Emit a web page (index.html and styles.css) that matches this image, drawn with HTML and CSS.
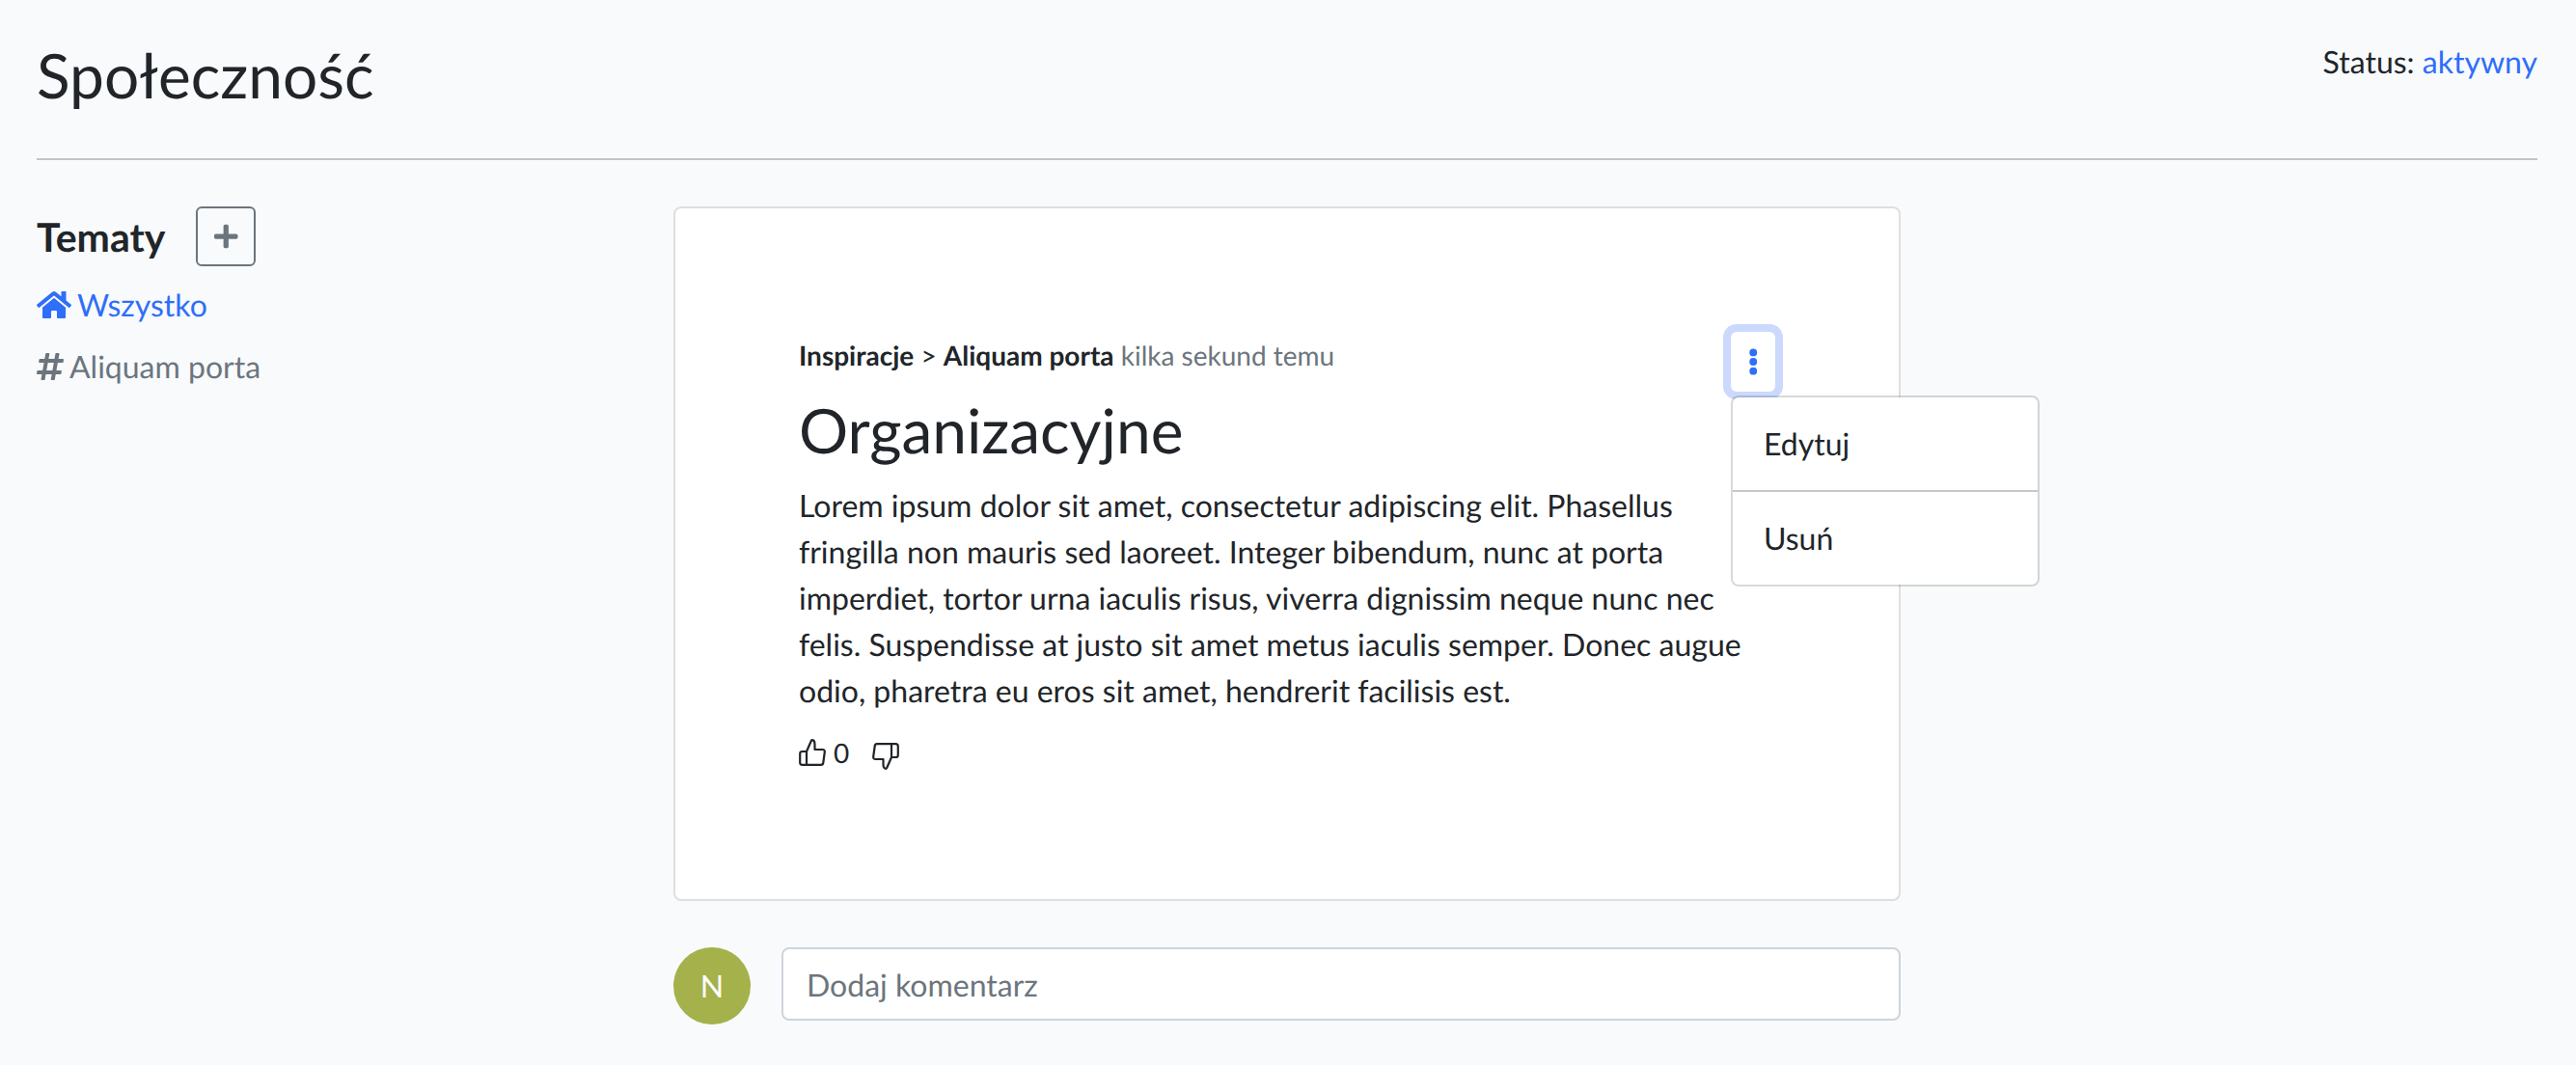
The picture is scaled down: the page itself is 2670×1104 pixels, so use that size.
FILE: index.html
```html
<!DOCTYPE html>
<html lang="pl">
<head>
  <meta charset="utf-8">
  <meta name="viewport" content="width=device-width, initial-scale=1">
  <title>Społeczność</title>
  <link rel="stylesheet" href="styles.css">
</head>
<body>
  <header class="page-header">
    <h1 class="title">Społeczność</h1>
    <p class="status">Status: <a href="#status">aktywny</a></p>
  </header>

  <div class="layout">
    <aside class="topics">
      <div class="topics-head">
        <h2 class="topics-title">Tematy</h2>
        <button class="add-button" type="button" aria-label="Dodaj temat">
          <svg class="icon-plus" viewBox="0 0 448 512" aria-hidden="true"><path d="M416 208H272V64c0-17.67-14.33-32-32-32h-32c-17.67 0-32 14.33-32 32v144H32c-17.67 0-32 14.33-32 32v32c0 17.67 14.33 32 32 32h144v144c0 17.67 14.33 32 32 32h32c17.67 0 32-14.33 32-32V304h144c17.67 0 32-14.33 32-32v-32c0-17.67-14.33-32-32-32z"/></svg>
        </button>
      </div>
      <nav class="topic-list" aria-label="Tematy">
        <a class="topic active" href="#all">
          <svg class="icon-home" viewBox="0 0 576 512" aria-hidden="true"><path d="M280.37 148.26L96 300.11V464a16 16 0 0 0 16 16l112.06-.29a16 16 0 0 0 15.92-16V368a16 16 0 0 1 16-16h64a16 16 0 0 1 16 16v95.64a16 16 0 0 0 16 16.05L464 480a16 16 0 0 0 16-16V300L295.67 148.26a12.19 12.19 0 0 0-15.3 0zM571.6 251.47L488 182.56V44.05a12 12 0 0 0-12-12h-56a12 12 0 0 0-12 12v72.61L318.47 43a48 48 0 0 0-61 0L4.34 251.47a12 12 0 0 0-1.6 16.9l25.5 31A12 12 0 0 0 45.15 301l235.22-193.74a12.19 12.19 0 0 1 15.3 0L530.9 301a12 12 0 0 0 16.9-1.6l25.5-31a12 12 0 0 0-1.7-16.93z"/></svg>
          Wszystko
        </a>
        <a class="topic" href="#aliquam-porta">
          <svg class="icon-hash" viewBox="0 0 448 512" aria-hidden="true"><path d="M440.667 182.109l7.143-40c1.313-7.355-4.342-14.109-11.813-14.109h-74.81l14.623-81.891C377.123 38.754 371.468 32 363.997 32h-40.632a12 12 0 0 0-11.813 9.891L296.175 128H197.54l14.623-81.891C213.477 38.754 207.822 32 200.35 32h-40.632a12 12 0 0 0-11.813 9.891L132.528 128H53.432a12 12 0 0 0-11.813 9.891l-7.143 40C33.163 185.246 38.818 192 46.289 192h74.81L98.242 320H19.146a12 12 0 0 0-11.813 9.891l-7.143 40C-1.123 377.246 4.532 384 12.003 384h74.81L72.19 465.891C70.877 473.246 76.532 480 84.003 480h40.632a12 12 0 0 0 11.813-9.891L151.826 384h98.634l-14.623 81.891C234.523 473.246 240.178 480 247.65 480h40.632a12 12 0 0 0 11.813-9.891L315.472 384h79.096a12 12 0 0 0 11.813-9.891l7.143-40c1.313-7.355-4.342-14.109-11.813-14.109h-74.81l22.857-128h79.096a12 12 0 0 0 11.813-9.891zM261.889 320h-98.634l22.857-128h98.634l-22.857 128z"/></svg>
          Aliquam porta
        </a>
      </nav>
    </aside>

    <main class="feed">
      <article class="post">
        <div class="post-content">
          <p class="post-meta"><strong>Inspiracje</strong> &gt; <strong>Aliquam porta</strong> <span class="muted">kilka sekund temu</span></p>
          <h2 class="title">Organizacyjne</h2>
          <p class="post-text">Lorem ipsum dolor sit amet, consectetur adipiscing elit. Phasellus fringilla non mauris sed laoreet. Integer bibendum, nunc at porta imperdiet, tortor urna iaculis risus, viverra dignissim neque nunc nec felis. Suspendisse at justo sit amet metus iaculis semper. Donec augue odio, pharetra eu eros sit amet, hendrerit facilisis est.</p>
          <div class="votes">
            <button class="vote" type="button" aria-label="Lubię to">
              <svg class="icon-thumb" viewBox="0 0 28 28" aria-hidden="true"><path d="M8 13H3.500Q1.200 13 1.200 15.300V24.500Q1.200 26.800 3.500 26.800H23Q25 26.800 25.300 24.500L26.800 13.500Q27 11 24.500 11H16.500V5.500Q16.500 1.200 13.500 1.200Q13 1.200 12.700 2.200L8 13V26.800"/></svg>
              <span>0</span>
            </button>
            <button class="vote" type="button" aria-label="Nie lubię">
              <svg class="icon-thumb icon-down" viewBox="0 0 28 28" aria-hidden="true"><path d="M20 15H24.500Q26.800 15 26.800 12.700V3.500Q26.800 1.200 24.500 1.200H5Q3 1.200 2.700 3.500L1.200 14.500Q1 17 3.500 17H11.500V22.500Q11.500 26.800 14.500 26.800Q15 26.800 15.300 25.800L20 15V1.200"/></svg>
            </button>
          </div>
        </div>
        <div class="dropdown">
          <button class="menu-button" type="button" aria-label="Opcje" aria-expanded="true">
            <svg class="icon-dots" viewBox="0 0 192 512" aria-hidden="true"><circle cx="96" cy="80" r="72"/><circle cx="96" cy="256" r="72"/><circle cx="96" cy="432" r="72"/></svg>
          </button>
          <div class="menu">
            <button class="menu-item" type="button">Edytuj</button>
            <button class="menu-item" type="button">Usuń</button>
          </div>
        </div>
      </article>

      <form class="comment">
        <span class="avatar">N</span>
        <input class="comment-input" type="text" placeholder="Dodaj komentarz" aria-label="Dodaj komentarz">
      </form>
    </main>
  </div>
</body>
</html>
```
FILE: styles.css
```css
* {
  box-sizing: border-box;
}

body {
  margin: 0;
  padding: 40px 40px 32px 38px;
  background: #f8fafc;
  color: #212529;
  font-family: Lato, sans-serif;
  font-size: 32px;
  line-height: 48px;
  text-rendering: geometricPrecision;
}

h1, h2, p {
  margin: 0;
}

button, input {
  font: inherit;
  color: inherit;
  text-rendering: inherit;
}

a {
  color: #2f6ef9;
  text-decoration: none;
}

svg {
  fill: currentColor;
  flex: none;
}

.page-header {
  display: flex;
  justify-content: space-between;
  align-items: flex-start;
  padding-bottom: 48px;
  border-bottom: 2px solid #c2c4c6;
}

.title {
  font-size: 64px;
  font-weight: 400;
  line-height: 76px;
}

.layout {
  display: grid;
  grid-template-columns: repeat(12, minmax(0, 1fr));
  column-gap: 48px;
  padding-top: 48px;
}

.topics {
  grid-column: span 3;
}

.topics-head {
  display: flex;
  align-items: flex-start;
  gap: 32px;
}

.topics-title {
  font-size: 41px;
  font-weight: 700;
  line-height: 64px;
}

.add-button {
  display: flex;
  align-items: center;
  justify-content: center;
  width: 62px;
  height: 62px;
  padding: 0;
  border: 2px solid #6c757d;
  border-radius: 6px;
  background: transparent;
  color: #6c757d;
}

.icon-plus {
  height: 28px;
}

.topic-list {
  display: flex;
  flex-direction: column;
  gap: 16px;
  padding-top: 14px;
}

.topic {
  display: flex;
  align-items: center;
  gap: 6px;
  color: #6c757d;
}

.topic.active {
  color: #2f6ef9;
}

.icon-home,
.icon-hash {
  height: 32px;
}

.feed {
  grid-column: span 6;
}

.post {
  display: flex;
  align-items: flex-start;
  padding: 128px;
  border: 2px solid #dfdfdf;
  border-radius: 8px;
  background: #fff;
}

.post-content {
  display: flex;
  flex: 1;
  flex-direction: column;
  gap: 16px;
}

.post-text {
  margin-right: -16px;
}

.post-meta,
.votes {
  font-size: 28px;
}

.muted {
  color: #6c757d;
}

.votes {
  display: flex;
  gap: 24px;
}

.vote {
  display: flex;
  align-items: center;
  gap: 8px;
  padding: 0;
  border: 0;
  background: none;
}

.icon-thumb {
  width: 28px;
  height: 28px;
  fill: none;
  stroke: currentColor;
  stroke-width: 2.2;
  stroke-linejoin: round;
}

.icon-down {
  margin-top: 8px;
}

.dropdown {
  position: relative;
}

.menu-button {
  display: flex;
  align-items: center;
  justify-content: center;
  width: 46px;
  height: 62px;
  padding: 0;
  border: 0;
  border-radius: 6px;
  background: #fff;
  box-shadow: 0 0 0 8px #cbd9fd;
  color: #2f6ef9;
}

.icon-dots {
  height: 28px;
}

.menu {
  position: absolute;
  top: 100%;
  left: 0;
  width: 320px;
  margin-top: 4px;
  border: 2px solid rgba(0, 0, 0, 0.15);
  border-radius: 8px;
  background: #fff;
  background-clip: padding-box;
}

.menu-item {
  display: block;
  width: 100%;
  padding: 24px 32px;
  border: 0;
  background: none;
  text-align: left;
}

.menu-item + .menu-item {
  border-top: 2px solid #c7c8c9;
}

.comment {
  display: flex;
  align-items: flex-start;
  gap: 32px;
  padding-top: 48px;
}

.avatar {
  flex: none;
  width: 80px;
  border-radius: 50%;
  background: #a5b14a;
  color: #fff;
  line-height: 80px;
  text-align: center;
}

.comment-input {
  flex: 1;
  min-width: 0;
  height: 76px;
  padding: 12px 24px;
  border: 2px solid #ced4da;
  border-radius: 8px;
  background: #fff;
}

.comment-input::placeholder {
  color: #6c757d;
  opacity: 1;
}
```
